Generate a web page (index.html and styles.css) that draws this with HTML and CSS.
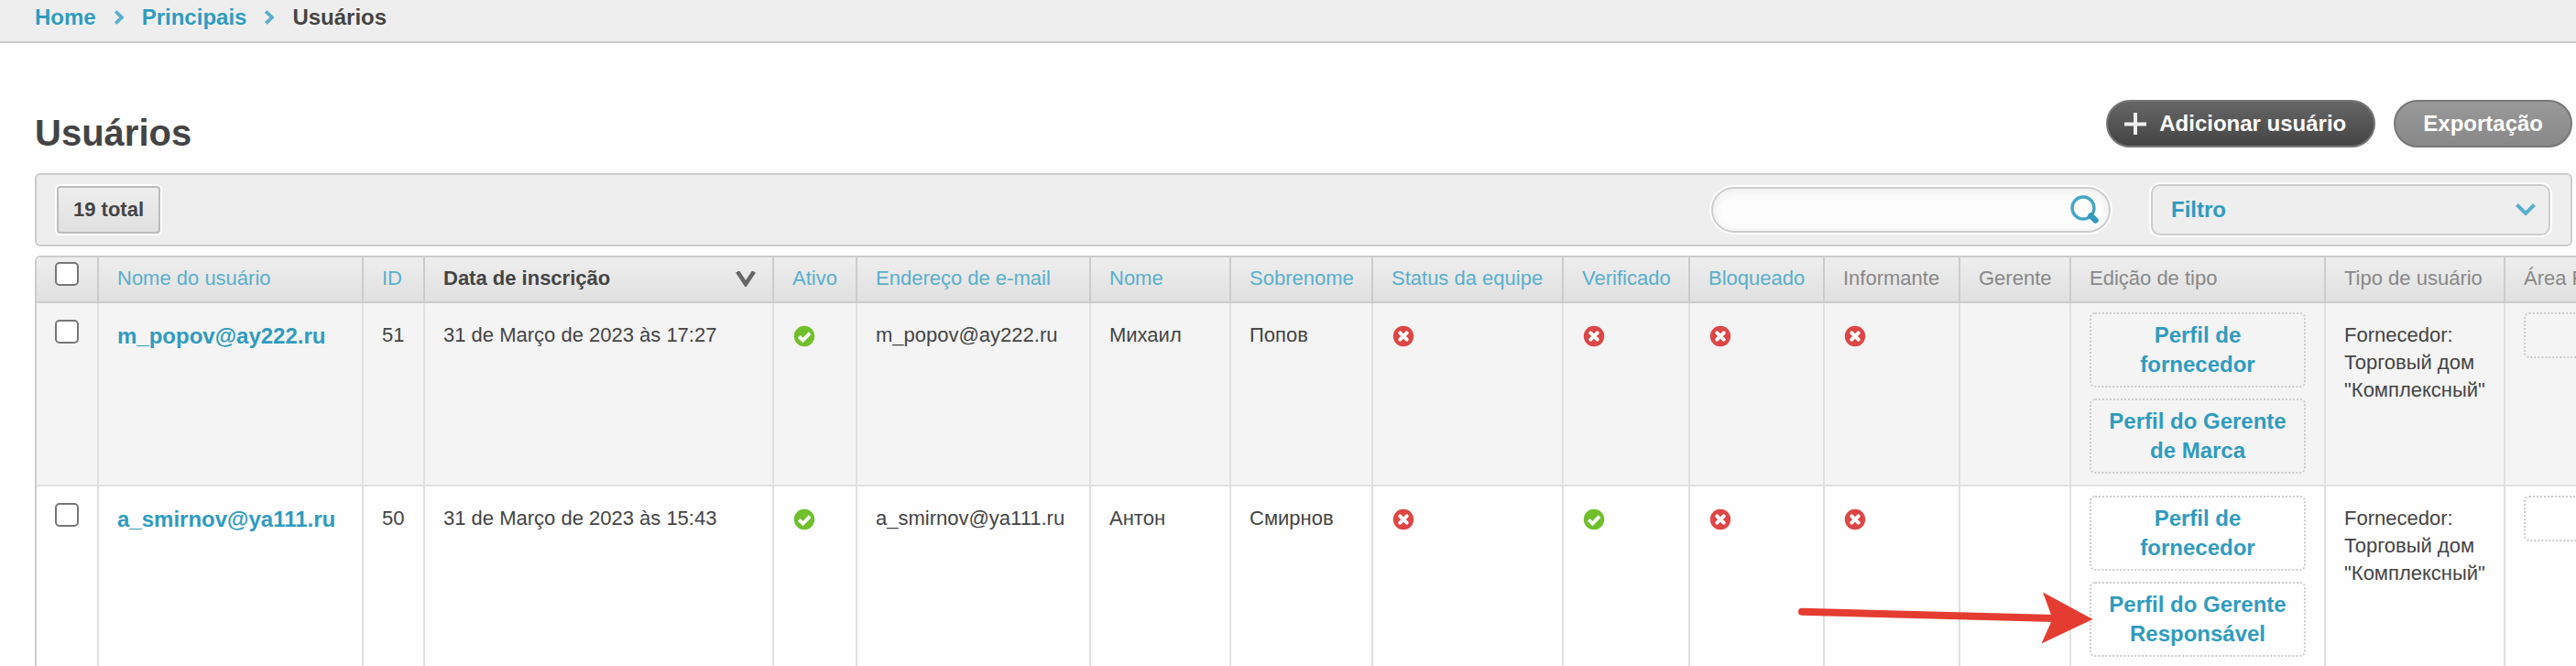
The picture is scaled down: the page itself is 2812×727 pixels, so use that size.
FILE: index.html
```html
<!DOCTYPE html>
<html lang="pt-BR">
<head>
<meta charset="utf-8">
<meta name="viewport" content="width=device-width, initial-scale=1">
<title>Usuários</title>
<link rel="stylesheet" href="styles.css">
</head>
<body>
<svg class="sprite" aria-hidden="true">
  <symbol id="chevron" viewBox="0 0 10 16"><path d="M1.200 1.500L8 8L1.200 14.500" fill="none" stroke="currentColor" stroke-width="3.800"/></symbol>
  <symbol id="yes" viewBox="0 0 26 26"><circle cx="13" cy="13" r="11.200" fill="#70bf2b"/><path d="M7.200 13.400l4.300 4.200 7.600-8" fill="none" stroke="#fff" stroke-width="3.800"/></symbol>
  <symbol id="no" viewBox="0 0 26 26"><circle cx="13" cy="13" r="11.200" fill="#dd4646"/><path d="M9.300 9.300l7.400 7.400M16.700 9.300l-7.400 7.400" fill="none" stroke="#fff" stroke-width="4" stroke-linecap="round"/></symbol>
</svg>

<nav class="breadcrumbs" aria-label="Navegação">
  <a href="#">Home</a>
  <svg class="crumb-sep"><use href="#chevron"/></svg>
  <a href="#">Principais</a>
  <svg class="crumb-sep"><use href="#chevron"/></svg>
  <span>Usuários</span>
</nav>

<main class="content">
  <header class="page-head">
    <h1>Usuários</h1>
    <div class="tools">
      <button type="button" class="pill pill-add">
        <svg class="plus" viewBox="0 0 24 24"><path d="M12 0v24M0 12.500h24" stroke="#eee" stroke-width="4"/></svg>
        Adicionar usuário
      </button>
      <button type="button" class="pill">Exportação</button>
    </div>
  </header>

  <section class="toolbar">
    <span class="total">19 total</span>
    <form class="search">
      <input type="text" aria-label="Pesquisar">
      <button type="submit" aria-label="Buscar">
        <svg class="lens" viewBox="0 0 32 32"><circle cx="14" cy="14" r="12" fill="none" stroke="#45a5c6" stroke-width="3.400"/><path d="M22.500 22.500L27.500 27.500" stroke="#309bbf" stroke-width="6.500" stroke-linecap="round"/></svg>
      </button>
    </form>
    <button type="button" class="filter">Filtro
      <svg class="caret" viewBox="0 0 22 14"><path d="M1.500 1.500L11 11L20.500 1.500" fill="none" stroke="currentColor" stroke-width="4"/></svg>
    </button>
  </section>

  <div class="results-wrap">
  <table class="results">
    <colgroup>
      <col class="c-check"><col class="c-user"><col class="c-id"><col class="c-date"><col class="c-active"><col class="c-mail"><col class="c-first"><col class="c-last"><col class="c-staff"><col class="c-verified"><col class="c-blocked"><col class="c-informer"><col class="c-manager"><col class="c-edit"><col class="c-type"><col class="c-area">
    </colgroup>
    <thead>
      <tr>
        <th class="check"><input type="checkbox" aria-label="Selecionar todos"></th>
        <th><a href="#">Nome do usuário</a></th>
        <th><a href="#">ID</a></th>
        <th class="sorted"><a href="#">Data de inscrição <svg class="sort" viewBox="0 0 22 17"><path d="M2 0.500L11 14L20 0.500" fill="none" stroke="#666" stroke-width="4.600"/></svg></a></th>
        <th><a href="#">Ativo</a></th>
        <th><a href="#">Endereço de e-mail</a></th>
        <th><a href="#">Nome</a></th>
        <th><a href="#">Sobrenome</a></th>
        <th><a href="#">Status da equipe</a></th>
        <th><a href="#">Verificado</a></th>
        <th><a href="#">Bloqueado</a></th>
        <th>Informante</th>
        <th>Gerente</th>
        <th>Edição de tipo</th>
        <th>Tipo de usuário</th>
        <th>Área Profissional</th>
      </tr>
    </thead>
    <tbody>
      <tr>
        <td class="check"><input type="checkbox" aria-label="Selecionar m_popov@ay222.ru"></td>
        <td><a class="user" href="#">m_popov@ay222.ru</a></td>
        <td>51</td>
        <td>31 de Março de 2023 às 17:27</td>
        <td><svg class="flag" role="img" aria-label="Sim"><use href="#yes"/></svg></td>
        <td>m_popov@ay222.ru</td>
        <td>Михаил</td>
        <td>Попов</td>
        <td><svg class="flag" role="img" aria-label="Não"><use href="#no"/></svg></td>
        <td><svg class="flag" role="img" aria-label="Não"><use href="#no"/></svg></td>
        <td><svg class="flag" role="img" aria-label="Não"><use href="#no"/></svg></td>
        <td><svg class="flag" role="img" aria-label="Não"><use href="#no"/></svg></td>
        <td></td>
        <td class="boxes"><a class="box" href="#">Perfil de fornecedor</a><a class="box" href="#">Perfil do Gerente de Marca</a></td>
        <td>Fornecedor: Торговый дом "Комплексный"</td>
        <td class="boxes"><span class="box"></span></td>
      </tr>
      <tr>
        <td class="check"><input type="checkbox" aria-label="Selecionar a_smirnov@ya111.ru"></td>
        <td><a class="user" href="#">a_smirnov@ya111.ru</a></td>
        <td>50</td>
        <td>31 de Março de 2023 às 15:43</td>
        <td><svg class="flag" role="img" aria-label="Sim"><use href="#yes"/></svg></td>
        <td>a_smirnov@ya111.ru</td>
        <td>Антон</td>
        <td>Смирнов</td>
        <td><svg class="flag" role="img" aria-label="Não"><use href="#no"/></svg></td>
        <td><svg class="flag" role="img" aria-label="Sim"><use href="#yes"/></svg></td>
        <td><svg class="flag" role="img" aria-label="Não"><use href="#no"/></svg></td>
        <td><svg class="flag" role="img" aria-label="Não"><use href="#no"/></svg></td>
        <td></td>
        <td class="boxes"><a class="box" href="#">Perfil de fornecedor</a><a class="box" href="#">Perfil do Gerente Responsável</a>
          <svg class="pointer" viewBox="0 0 324 60" aria-hidden="true"><path d="M4 23.700L280 31" stroke="#e53c31" stroke-width="8" stroke-linecap="round"/><path d="M321.500 32L267 2.500L276 27V35L265.500 58.500Z" fill="#e53c31"/></svg>
        </td>
        <td>Fornecedor: Торговый дом "Комплексный"</td>
        <td class="boxes"><span class="box"></span></td>
      </tr>
    </tbody>
  </table>
  </div>
</main>
</body>
</html>
```

FILE: styles.css
```css
* { box-sizing: border-box; }

body {
  display: flex;
  flex-direction: column;
  height: 100vh;
  margin: 0;
  overflow: hidden;
  background: #fefefe;
  color: #444;
  font: 22px/30px "Liberation Sans", Arial, sans-serif;
}

a { color: #309bbf; text-decoration: none; }
svg { flex: none; }
.sprite { display: none; }

.breadcrumbs {
  display: flex;
  flex: none;
  align-items: center;
  gap: 20px;
  padding: 3px 38px 10px;
  border-bottom: 2px solid #ccc;
  background: #eee;
  font-size: 24px;
  font-weight: bold;
  line-height: 32px;
  text-shadow: 0 2px 0 #f8f8f8;
}
.crumb-sep { width: 10px; height: 16px; color: #59afcc; }

.content {
  display: flex;
  flex: 1;
  flex-direction: column;
  min-height: 0;
  padding: 62px 0 0 38px;
}

.page-head {
  display: flex;
  flex: none;
  justify-content: space-between;
  margin: 0 4px 20px 0;
}
h1 {
  margin: 12px 0 0;
  font-size: 40px;
  line-height: 48px;
}
.tools { display: flex; align-items: flex-start; gap: 20px; }
.pill {
  display: flex;
  align-items: center;
  gap: 14px;
  height: 52px;
  padding: 0 30px;
  border: 2px solid #777;
  border-radius: 26px;
  background: linear-gradient(#999, #888);
  color: #fff;
  font: bold 24px/32px "Liberation Sans", Arial, sans-serif;
}
.pill-add { padding-left: 18px; background: linear-gradient(#666, #444); }
.plus { width: 24px; height: 24px; }

.toolbar {
  display: flex;
  flex: none;
  align-items: center;
  height: 80px;
  margin: 0 4px 10px 0;
  padding: 0 22px;
  border: 2px solid #ccc;
  border-radius: 6px;
  background: #eee;
}
.total {
  margin-right: auto;
  padding: 9px 16px;
  border: 2px solid #bbb;
  border-radius: 4px;
  background: linear-gradient(#eee, #e0e0e0);
  box-shadow: 0 0 0 2px #fff;
  font-weight: bold;
}
.search {
  display: flex;
  align-items: center;
  width: 436px;
  height: 50px;
  margin-right: 44px;
  padding: 0 10px 0 20px;
  border: 2px solid #ccc;
  border-radius: 25px;
  background: #fdfdfd;
  box-shadow: 0 0 0 2px #fff, inset 0 2px 12px #eaeaea;
}
.search input {
  flex: 1;
  min-width: 0;
  border: 0;
  outline: 0;
  background: none;
  color: #444;
  font: inherit;
}
.search button { display: flex; padding: 0; border: 0; background: none; }
.lens { width: 32px; height: 32px; }
.filter {
  display: flex;
  align-items: center;
  justify-content: space-between;
  width: 436px;
  height: 56px;
  padding: 0 14px 0 20px;
  border: 2px solid #ccc;
  border-radius: 10px;
  background: #eee;
  box-shadow: 0 0 0 2px #fff;
  color: #309bbf;
  font: bold 24px/32px "Liberation Sans", Arial, sans-serif;
}
.caret { width: 22px; height: 14px; color: #59afcc; }

.results-wrap { flex: 1; min-height: 0; overflow: hidden; }
.results {
  width: 3010px;
  border: 2px solid #ccc;
  border-radius: 6px;
  border-collapse: separate;
  border-spacing: 0;
  table-layout: fixed;
  overflow: hidden;
}
.c-check { width: 68px; }
.c-user { width: 289px; }
.c-id { width: 67px; }
.c-date { width: 381px; }
.c-active { width: 91px; }
.c-mail { width: 255px; }
.c-first { width: 153px; }
.c-last { width: 155px; }
.c-staff { width: 208px; }
.c-verified { width: 138px; }
.c-blocked { width: 147px; }
.c-informer { width: 148px; }
.c-manager { width: 121px; }
.c-edit { width: 278px; }
.c-type { width: 196px; }

th, td {
  padding: 20px 18px 0 20px;
  border-right: 2px solid #e0e0e0;
  border-bottom: 2px solid #e0e0e0;
  text-align: left;
  vertical-align: top;
}
th {
  padding: 8px 18px 10px 20px;
  border-color: #ccc;
  background: linear-gradient(#eee, #e0e0e0);
  color: #888;
  font-weight: normal;
  white-space: nowrap;
}
th a { color: #59afcc; }
.sorted a {
  display: flex;
  align-items: center;
  justify-content: space-between;
  color: #444;
  font-weight: bold;
}
.sort { width: 22px; height: 17px; }

td { background: #fefefe; }
tbody tr:nth-child(odd) td { background: #f4f4f4; }

.check { padding-right: 0; }
th.check { padding-top: 5px; padding-bottom: 0; }
td.check { padding-top: 18px; }
.check input {
  display: block;
  width: 26px;
  height: 26px;
  margin: 0;
  border: 2px solid #767676;
  border-radius: 5px;
  background: #fff;
  appearance: none;
}
.check input:checked { background: #309bbf; }

.user { display: block; font-size: 24px; font-weight: bold; line-height: 32px; }
.flag { display: block; width: 26px; height: 26px; margin-top: 3px; }

.boxes { position: relative; padding: 10px 20px 0; }
.box {
  display: block;
  min-height: 50px;
  margin-bottom: 12px;
  padding: 7px 18px;
  border: 2px dotted #ccc;
  border-radius: 6px;
  font-size: 24px;
  font-weight: bold;
  line-height: 32px;
  text-align: center;
}
.pointer {
  position: absolute;
  top: 113px;
  left: -298px;
  width: 324px;
  height: 60px;
}
```
